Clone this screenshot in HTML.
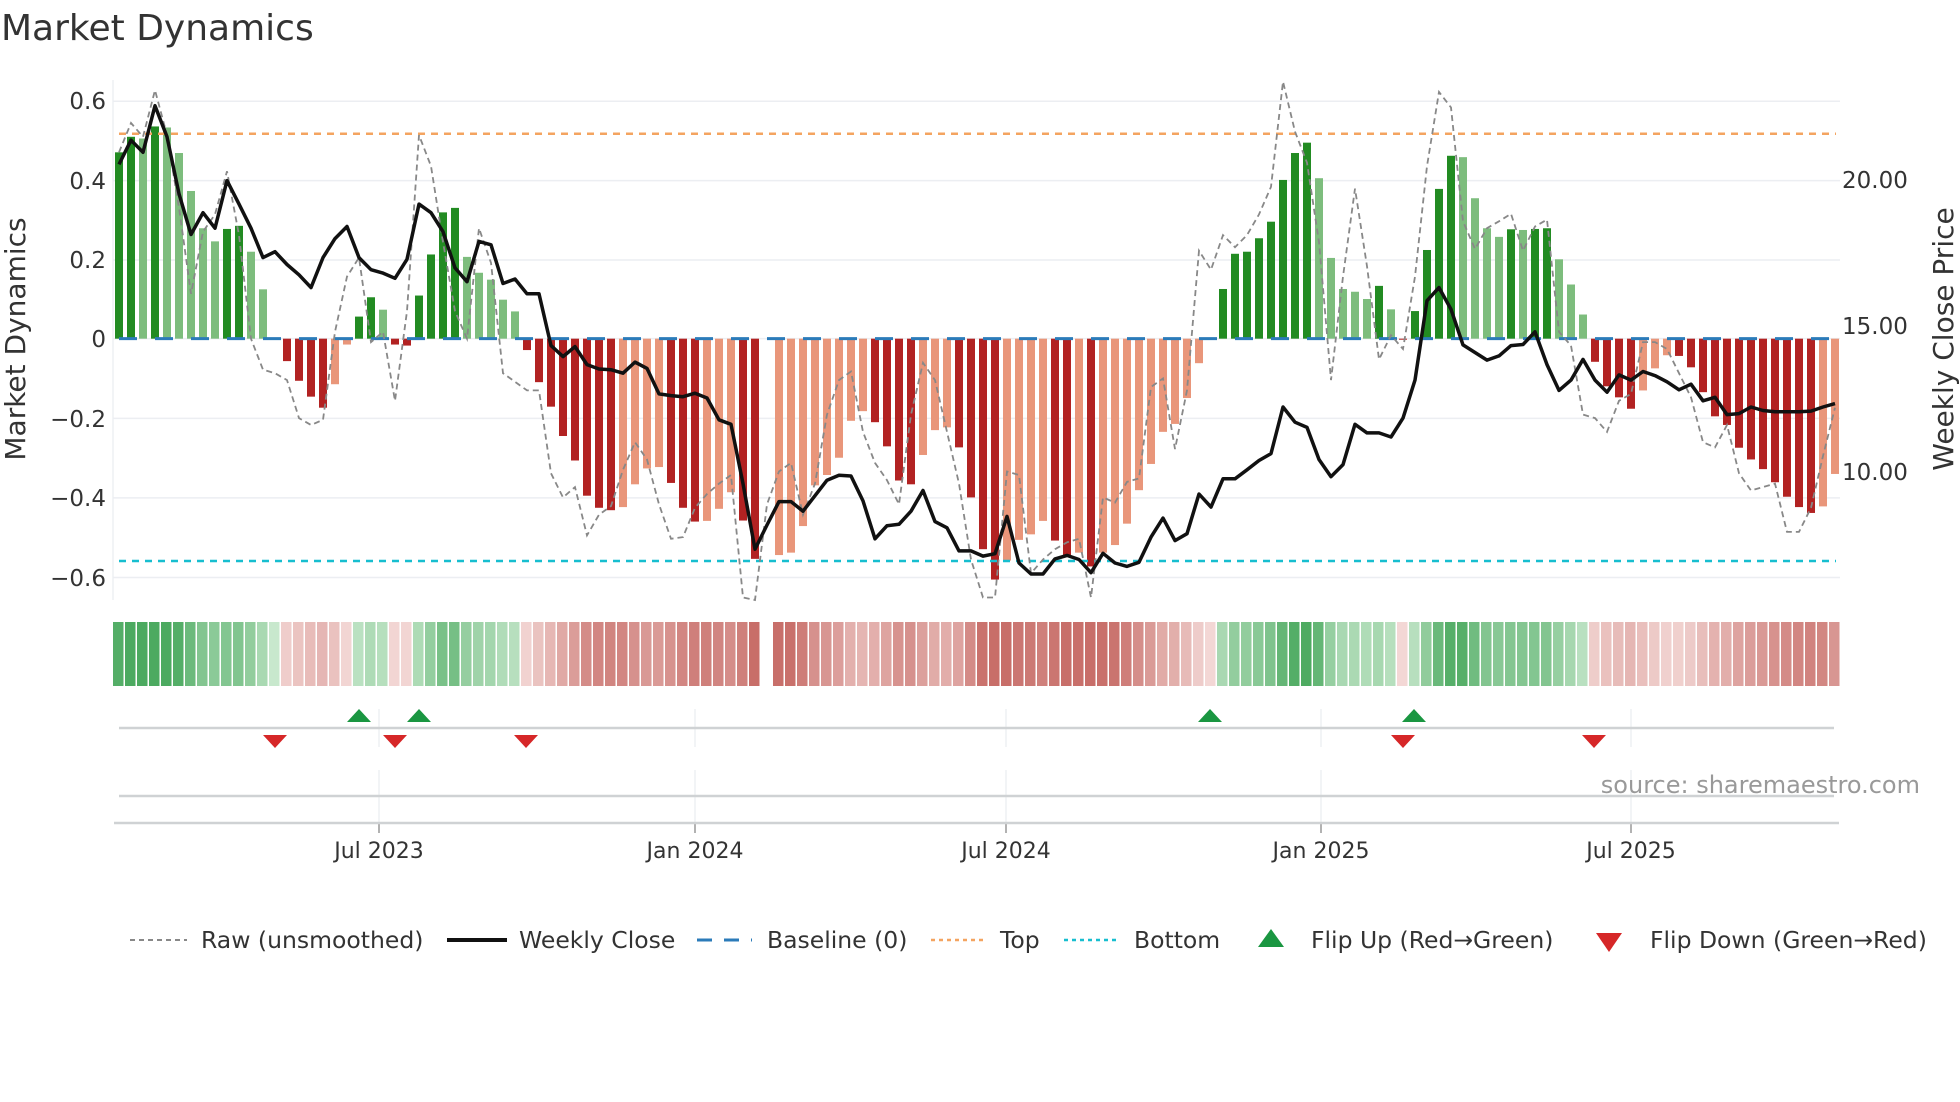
<!DOCTYPE html>
<html><head><meta charset="utf-8">
<style>
html,body{margin:0;padding:0;background:#fff;width:1960px;height:1102px;overflow:hidden}
svg{display:block}
text{font-family:"DejaVu Sans","Liberation Sans",sans-serif;fill:#333}
</style></head>
<body>
<svg id="s" width="1960" height="1102" viewBox="0 0 1960 1102" xmlns="http://www.w3.org/2000/svg">
<rect width="1960" height="1102" fill="#fff"/>
<text x="1" y="40" font-size="36">Market Dynamics</text>
<line x1="113" y1="80" x2="113" y2="600" stroke="#eef0f3" stroke-width="1.5"/>
<g id="grid"></g>
<g id="bars"></g>
<g id="refs"></g>
<g id="lines"></g>
<g font-size="23" text-anchor="end">
<text x="106" y="109">0.6</text>
<text x="106" y="189">0.4</text>
<text x="106" y="268">0.2</text>
<text x="106" y="347">0</text>
<text x="106" y="427">−0.2</text>
<text x="106" y="506">−0.4</text>
<text x="106" y="586">−0.6</text>
</g>
<g font-size="23">
<text x="1842" y="188">20.00</text>
<text x="1842" y="334">15.00</text>
<text x="1842" y="480">10.00</text>
</g>
<text transform="translate(25,339) rotate(-90)" font-size="28" text-anchor="middle">Market Dynamics</text>
<text transform="translate(1953,339) rotate(-90)" font-size="28" text-anchor="middle">Weekly Close Price</text>
<g id="heat"></g>
<g id="markers"></g>
<text x="1920" y="793" font-size="24" text-anchor="end" style="fill:#999">source: sharemaestro.com</text>
<g font-size="22" text-anchor="middle">
<text x="379" y="858">Jul 2023</text>
<text x="695" y="858">Jan 2024</text>
<text x="1006" y="858">Jul 2024</text>
<text x="1321" y="858">Jan 2025</text>
<text x="1631" y="858">Jul 2025</text>
</g>
<g font-size="23.5">
<line x1="130" y1="940" x2="187" y2="940" stroke="#888" stroke-width="2" stroke-dasharray="5,4"/>
<text x="201" y="948">Raw (unsmoothed)</text>
<line x1="447" y1="940" x2="507" y2="940" stroke="#111" stroke-width="4"/>
<text x="519" y="948">Weekly Close</text>
<line x1="697" y1="940" x2="752" y2="940" stroke="#2b7bb9" stroke-width="3" stroke-dasharray="15,12"/>
<text x="767" y="948">Baseline (0)</text>
<line x1="931" y1="940" x2="987" y2="940" stroke="#f4a460" stroke-width="2.5" stroke-dasharray="4,4"/>
<text x="1000" y="948">Top</text>
<line x1="1064" y1="940" x2="1120" y2="940" stroke="#17becf" stroke-width="2.5" stroke-dasharray="4,4"/>
<text x="1134" y="948">Bottom</text>
<path d="M1271,929 L1284,947 L1258,947 Z" fill="#1a9641"/>
<text x="1311" y="948">Flip Up (Red→Green)</text>
<path d="M1596,933 L1622,933 L1609,952 Z" fill="#d62728"/>
<text x="1650" y="948">Flip Down (Green→Red)</text>
</g>
</svg>
<script>
var NS="http://www.w3.org/2000/svg";
function el(p,t,a){var e=document.createElementNS(NS,t);for(var k in a)e.setAttribute(k,a[k]);document.getElementById(p).appendChild(e);return e;}
function Y(z){return 101.25+(z-92)*0.3451;}
var Z=Y(780);
[101.25,180.6,260,Z,418.4,497.9,577.5].forEach(function(y){el("grid","line",{x1:113,x2:1840,y1:y,y2:y,stroke:"#eceef2","stroke-width":1.5});});
var B="240G,195G,200g,165G,168g,242g,352g,460g,498g,462G,453G,528g,637g,780r,845R,902R,948R,980R,912r,797r,716G,660G,696g,797R,800R,655G,536G,414G,401G,543g,589g,609g,667g,701g,813R,906R,977R,1062R,1133R,1235R,1270R,1277R,1268r,1202r,1156r,1152r,1198R,1270R,1310R,1308r,1273r,1225r,1307R,1418R,0x,1407r,1400r,1323r,1205r,1175r,1125r,1018r,990r,1022R,1092R,1191R,1202R,1117r,1045r,1037r,1095R,1240R,1390R,1478R,1423r,1363r,1347r,1308r,1365R,1408R,1400r,1440R,1400r,1378r,1316r,1219r,1143r,1050r,1027r,952r,851r,783r,636G,534G,528G,489G,441G,320G,242G,212G,315g,546g,636g,644g,665g,627G,695g,783R,700G,523G,346G,250G,254g,373g,460g,485g,463G,465g,462G,460G,550g,623g,710g,847R,918R,950R,983R,930r,866r,828r,830R,863R,935R,1005R,1030R,1096R,1130R,1158R,1196R,1238R,1268R,1285R,1266r,1172r".split(",");
var col={G:"#228b22",g:"#7dbd7d",R:"#b22222",r:"#e9967a"};
function X(i){return 119+i*12;}
B.forEach(function(s,i){var t=s.slice(-1);if(t=="x")return;var z=parseInt(s);var y=Y(z);var y0=Math.min(y,Z),h=Math.abs(y-Z);
 el("bars","rect",{x:X(i)-4,y:y0,width:8,height:Math.max(h,1),fill:col[t]});
 var v=(780-z)/1150, c;
 if(v>=0){var k=Math.min(1,v/0.5);c=[200-124*k,232-62*k,205-109*k];}
 else{var k=Math.min(1,-v/0.55);c=[243-43*k,216-106*k,214-109*k];}
 el("heat","rect",{x:X(i)-6,y:622,width:10.5,height:64,fill:"rgb("+c.map(Math.round).join(",")+")"});
});
el("refs","line",{x1:119,x2:1836,y1:Z,y2:Z,stroke:"#2b7bb9","stroke-width":3,"stroke-dasharray":"18,18"});
el("refs","line",{x1:119,x2:1836,y1:133.75,y2:133.75,stroke:"#f4a460","stroke-width":2.5,"stroke-dasharray":"7,6"});
el("refs","line",{x1:119,x2:1836,y1:561,y2:561,stroke:"#17becf","stroke-width":2.5,"stroke-dasharray":"7,6"});
var K=[275,205,240,105,195,360,478,415,460,322,390,460,545,528,565,595,632,545,490,455,545,580,590,605,550,390,415,470,575,615,498,508,620,607,650,650,800,832,803,855,868,870,880,848,866,940,945,948,938,952,1015,1028,1200,1390,1320,1252,1252,1280,1235,1190,1176,1178,1250,1360,1322,1318,1280,1220,1310,1328,1395,1395,1410,1403,1295,1430,1462,1462,1418,1408,1420,1458,1402,1430,1440,1428,1355,1300,1365,1345,1230,1268,1186,1186,1160,1133,1113,978,1022,1037,1130,1180,1145,1028,1053,1053,1065,1010,900,670,632,695,798,820,842,830,800,797,760,855,930,900,840,900,935,885,900,875,887,905,928,912,960,950,1000,997,978,988,992,992,992,990,978,968];
var R=[240,155,195,60,190,400,650,470,420,295,480,780,870,880,900,1010,1030,1015,760,600,545,790,760,960,700,190,280,500,700,780,460,560,880,905,930,930,1170,1240,1210,1350,1290,1265,1160,1080,1130,1260,1360,1355,1270,1230,1200,1175,1530,1560,1260,1165,1140,1290,1200,1000,900,875,1050,1140,1190,1260,1000,850,900,1050,1200,1420,1530,1530,1165,1175,1460,1420,1390,1370,1360,1530,1240,1255,1195,1185,920,895,1100,930,525,580,480,515,480,420,340,35,180,270,500,900,600,345,570,840,770,810,600,280,65,110,440,520,460,440,418,525,455,435,760,800,1000,1010,1050,960,940,790,790,810,880,950,1080,1095,1030,1170,1220,1210,1200,1340,1340,1270,1120,980];
function pts(a){return a.slice(0,144).map(function(z,i){return X(i)+","+Math.min(Y(z),600).toFixed(1);}).join(" ");}
el("lines","polyline",{points:pts(R),fill:"none",stroke:"#888","stroke-width":1.8,"stroke-dasharray":"6,4"});
el("lines","polyline",{points:pts(K),fill:"none",stroke:"#111","stroke-width":3.5,"stroke-linejoin":"round"});
[379,695,1006,1321,1631].forEach(function(x){
 el("markers","line",{x1:x,x2:x,y1:709,y2:747,stroke:"#eef0f3","stroke-width":1.5});
 el("markers","line",{x1:x,x2:x,y1:770,y2:823,stroke:"#eef0f3","stroke-width":1.5});
 el("markers","line",{x1:x,x2:x,y1:823,y2:833,stroke:"#999","stroke-width":1.5});
});
el("markers","line",{x1:119,x2:1834,y1:728,y2:728,stroke:"#cfd2d4","stroke-width":2.5});
el("markers","line",{x1:119,x2:1834,y1:796,y2:796,stroke:"#cfd2d4","stroke-width":2.5});
el("markers","line",{x1:114,x2:1839,y1:823,y2:823,stroke:"#cfd2d4","stroke-width":2.5});
[359,419,1210,1414].forEach(function(x){el("markers","path",{d:"M"+x+",709 L"+(x+12)+",722 L"+(x-12)+",722 Z",fill:"#1a9641"});});
[275,395,526,1403,1594].forEach(function(x){el("markers","path",{d:"M"+(x-12)+",735 L"+(x+12)+",735 L"+x+",748 Z",fill:"#d62728"});});
</script>
</body></html>
